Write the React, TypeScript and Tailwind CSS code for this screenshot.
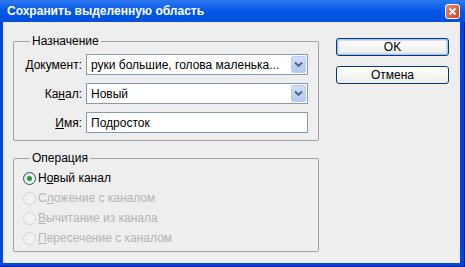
import React from "react";

function Chevron() {
  return (
    <svg width="9" height="7" viewBox="0 0 9 7">
      <path d="M1 1.5 L4.5 5 L8 1.5" fill="none" stroke="#4D6185" strokeWidth="1.8" />
    </svg>
  );
}

function Select({ value }: { value: string }) {
  return (
    <div className="flex h-[21px] w-[222px] items-center border border-[#7F9DB9] bg-white">
      <span className="flex-1 truncate pl-[4px] text-black">{value}</span>
      <div className="mr-[1px] flex h-[17px] w-[15px] items-center justify-center rounded-[2px] border border-[#BACBEF] bg-gradient-to-b from-[#D2DEFA] to-[#B4C6F3]">
        <Chevron />
      </div>
    </div>
  );
}

function Row({ label, children }: { label: React.ReactNode; children: React.ReactNode }) {
  return (
    <div className="flex items-center">
      <div className="w-[68px] text-right text-black">{label}</div>
      <div className="ml-[4px]">{children}</div>
    </div>
  );
}

function Radio({ checked, disabled, label }: { checked?: boolean; disabled?: boolean; label: React.ReactNode }) {
  return (
    <div className="flex h-[20px] items-center">
      <div
        className={
          disabled
            ? "h-[13px] w-[13px] rounded-full border border-[#D6D4CC] bg-[#F2F2F0]"
            : "flex h-[13px] w-[13px] items-center justify-center rounded-full border border-[#1C5180] bg-gradient-to-br from-[#DCDCD6] to-white"
        }
      >
        {checked && <div className="h-[5px] w-[5px] rounded-full bg-[#21A121]" />}
      </div>
      <span className={disabled ? "ml-[2px] text-[#B4B4B4]" : "ml-[2px] text-black"}>{label}</span>
    </div>
  );
}

export default function App() {
  return (
    <div className="flex h-[267px] w-[465px] flex-col bg-[#0445DA] font-['Liberation_Sans',Arial,sans-serif] text-[12px] leading-[14px]">
      <div className="flex h-[22px] items-center justify-between bg-gradient-to-b from-[#2C78F0] via-[#0457E6] to-[#0350DC] pl-[7px] pr-[5px]">
        <span className="font-bold text-white">Сохранить выделенную область</span>
        <div className="flex h-[15px] w-[15px] items-center justify-center rounded-[3px] border border-white bg-gradient-to-br from-[#E88C6E] to-[#C9401E]">
          <svg width="9" height="9" viewBox="0 0 9 9">
            <path d="M1.5 1.5 L7.5 7.5 M7.5 1.5 L1.5 7.5" stroke="white" strokeWidth="1.8" />
          </svg>
        </div>
      </div>
      <div className="flex-1 border-b border-r border-[#00209A] pb-[3px] pl-[3px] pr-[4px]">
        <div className="flex h-full bg-[#EEEEEE] pl-[10px]">
          <div className="w-[306px] pt-[12px]">
            <fieldset className="rounded-[2px] border border-[#A2A2A2] p-0 pb-[7px]">
              <legend className="ml-[16px] px-[2px] text-black">Назначение</legend>
              <div className="flex flex-col gap-[8px] pt-[6px]">
                <Row label={<><u>Д</u>окумент:</>}>
                  <Select value="руки большие, голова маленька..." />
                </Row>
                <Row label={<>Ка<u>н</u>ал:</>}>
                  <Select value="Новый" />
                </Row>
                <Row label={<><u>И</u>мя:</>}>
                  <div className="flex h-[21px] w-[222px] items-center border border-[#7F9DB9] bg-white pl-[4px] text-black">
                    Подросток
                  </div>
                </Row>
              </div>
            </fieldset>
            <fieldset className="mt-[10px] rounded-[2px] border border-[#A2A2A2] p-0 pb-[3px]">
              <legend className="ml-[16px] px-[2px] text-black">Операция</legend>
              <div className="pl-[9px] pt-[3px]">
                <Radio checked label={<>Н<u>о</u>вый канал</>} />
                <Radio disabled label={<>С<u>л</u>ожение с каналом</>} />
                <Radio disabled label={<><u>В</u>ычитание из канала</>} />
                <Radio disabled label={<><u>П</u>ересечение с каналом</>} />
              </div>
            </fieldset>
          </div>
          <div className="ml-[17px] flex flex-col gap-[10px] pt-[16px]">
            <button className="h-[18px] w-[113px] rounded-[3px] border border-[#003C74] bg-gradient-to-b from-white to-[#ECEBE6] text-black shadow-[inset_0_0_0_1px_#A9C4F0,inset_0_0_0_2px_#CEDCF6]">
              OK
            </button>
            <button className="h-[18px] w-[113px] rounded-[3px] border border-[#003C74] bg-gradient-to-b from-white to-[#ECEBE6] text-black">
              Отмена
            </button>
          </div>
        </div>
      </div>
    </div>
  );
}
